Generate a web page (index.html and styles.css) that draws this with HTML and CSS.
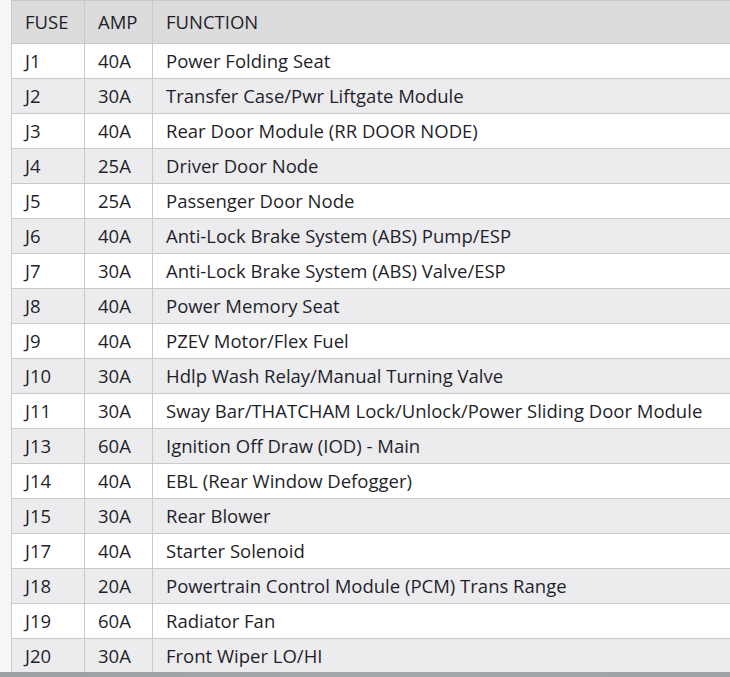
FILE: index.html
```html
<!DOCTYPE html>
<html>
<head>
<meta charset="utf-8">
<link rel="stylesheet" href="styles.css">
</head>
<body>
<div class="page">
<table class="fuses">
<colgroup><col class="c1"><col class="c2"><col class="c3"></colgroup>
<thead>
<tr><th>FUSE</th><th>AMP</th><th>FUNCTION</th></tr>
</thead>
<tbody>
<tr><td>J1</td><td>40A</td><td>Power Folding Seat</td></tr>
<tr><td>J2</td><td>30A</td><td>Transfer Case/Pwr Liftgate Module</td></tr>
<tr><td>J3</td><td>40A</td><td>Rear Door Module (RR DOOR NODE)</td></tr>
<tr><td>J4</td><td>25A</td><td>Driver Door Node</td></tr>
<tr><td>J5</td><td>25A</td><td>Passenger Door Node</td></tr>
<tr><td>J6</td><td>40A</td><td>Anti-Lock Brake System (ABS) Pump/ESP</td></tr>
<tr><td>J7</td><td>30A</td><td>Anti-Lock Brake System (ABS) Valve/ESP</td></tr>
<tr><td>J8</td><td>40A</td><td>Power Memory Seat</td></tr>
<tr><td>J9</td><td>40A</td><td>PZEV Motor/Flex Fuel</td></tr>
<tr><td>J10</td><td>30A</td><td>Hdlp Wash Relay/Manual Turning Valve</td></tr>
<tr><td>J11</td><td>30A</td><td>Sway Bar/THATCHAM Lock/Unlock/Power Sliding Door Module</td></tr>
<tr><td>J13</td><td>60A</td><td>Ignition Off Draw (IOD) - Main</td></tr>
<tr><td>J14</td><td>40A</td><td>EBL (Rear Window Defogger)</td></tr>
<tr><td>J15</td><td>30A</td><td>Rear Blower</td></tr>
<tr><td>J17</td><td>40A</td><td>Starter Solenoid</td></tr>
<tr><td>J18</td><td>20A</td><td>Powertrain Control Module (PCM) Trans Range</td></tr>
<tr><td>J19</td><td>60A</td><td>Radiator Fan</td></tr>
<tr><td>J20</td><td>30A</td><td>Front Wiper LO/HI</td></tr>
</tbody>
</table>
</div>
<div class="bottombar"></div>
</body>
</html>
```
FILE: styles.css
```css
html, body {
  margin: 0;
  padding: 0;
  overflow: hidden;
  background: #f6f6f7;
}
.page {
  padding-left: 11px;
}
.fuses {
  border-collapse: collapse;
  table-layout: fixed;
  width: 740px;
  font-family: "Open Sans", "Noto Sans", sans-serif;
  font-size: 18.5px;
  color: #1f1f2b;
  background: #fff;
}
.c1 { width: 73px; }
.c2 { width: 68px; }
.fuses th, .fuses td {
  border: 1px solid #c9c9cb;
  text-align: left;
  font-weight: normal;
  padding: 0 0 0 13px;
  white-space: nowrap;
  line-height: 24px;
}
.fuses th {
  background: #dcdcdc;
  height: 42px;
}
.fuses td {
  height: 34px;
}
.fuses tbody tr:nth-child(even) td {
  background: #ececee;
}
.bottombar {
  position: fixed;
  left: 0;
  right: 0;
  bottom: 0;
  height: 5px;
  background: linear-gradient(90deg, #9aa0a4, #a3a8ab 50%, #9ca2a6);
}
```
